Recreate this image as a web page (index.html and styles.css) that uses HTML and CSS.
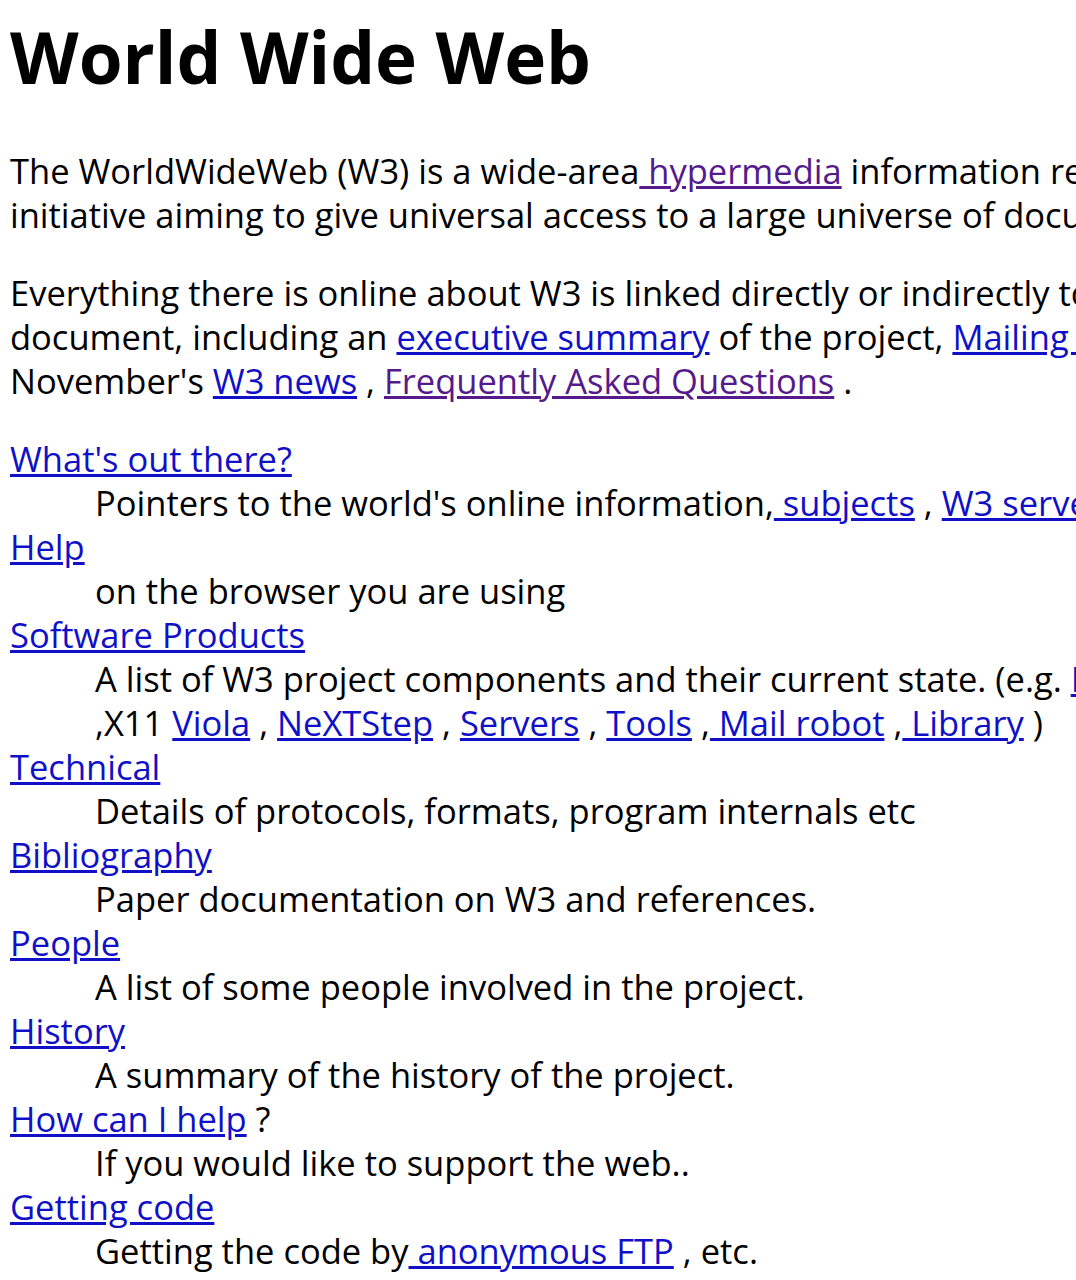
FILE: index.html
```html
<!DOCTYPE html>
<html lang="en">
<head>
  <meta charset="UTF-8">
  <title>The World Wide Web project</title>
  <link rel="stylesheet" href="styles.css">
</head>
<body>

<h1>World Wide Web</h1>

<p>The WorldWideWeb (W3) is a wide-area<a class="seen" href="#"> hypermedia</a> information retrieval<br>
initiative aiming to give universal access to a large universe of documents.</p>

<p>Everything there is online about W3 is linked directly or indirectly to this<br>
document, including an <a href="#">executive summary</a> of the project, <a href="#">Mailing lists</a> , <a href="#">Policy</a> ,<br>
November's <a href="#">W3 news</a> , <a class="seen" href="#">Frequently Asked Questions</a> .</p>

<dl>
  <dt><a href="#">What's out there?</a></dt>
  <dd>Pointers to the world's online information,<a href="#"> subjects</a> , <a href="#">W3 servers</a>, etc.</dd>
  <dt><a href="#">Help</a></dt>
  <dd>on the browser you are using</dd>
  <dt><a href="#">Software Products</a></dt>
  <dd>A list of W3 project components and their current state. (e.g. <a href="#">Line Mode</a><br>
  ,X11 <a href="#">Viola</a> , <a href="#">NeXTStep</a> , <a href="#">Servers</a> , <a href="#">Tools</a> ,<a href="#"> Mail robot</a> ,<a href="#"> Library</a> )</dd>
  <dt><a href="#">Technical</a></dt>
  <dd>Details of protocols, formats, program internals etc</dd>
  <dt><a href="#">Bibliography</a></dt>
  <dd>Paper documentation on W3 and references.</dd>
  <dt><a href="#">People</a></dt>
  <dd>A list of some people involved in the project.</dd>
  <dt><a href="#">History</a></dt>
  <dd>A summary of the history of the project.</dd>
  <dt><a href="#">How can I help</a> ?</dt>
  <dd>If you would like to support the web..</dd>
  <dt><a href="#">Getting code</a></dt>
  <dd>Getting the code by<a href="#"> anonymous FTP</a> , etc.</dd>
</dl>

</body>
</html>
```

FILE: styles.css
```css
html {
  overflow: hidden;
}

body {
  margin: 0;
  padding: 12px 10px 0;
  width: 1600px;
  font-family: 'Open Sans', 'Noto Sans', sans-serif;
  font-size: 34.5px;
  line-height: 44px;
  color: #000;
  background: #fff;
}

h1 {
  margin: 0 0 47px;
  font-size: 71px;
  line-height: 90px;
  font-weight: bold;
}

p {
  margin: 0 0 34px;
  white-space: nowrap;
}

a {
  color: #1010c8;
}

a.seen {
  color: #551a8b;
}

dl {
  margin: 0;
  white-space: nowrap;
}

dd {
  margin-left: 85px;
}
```
